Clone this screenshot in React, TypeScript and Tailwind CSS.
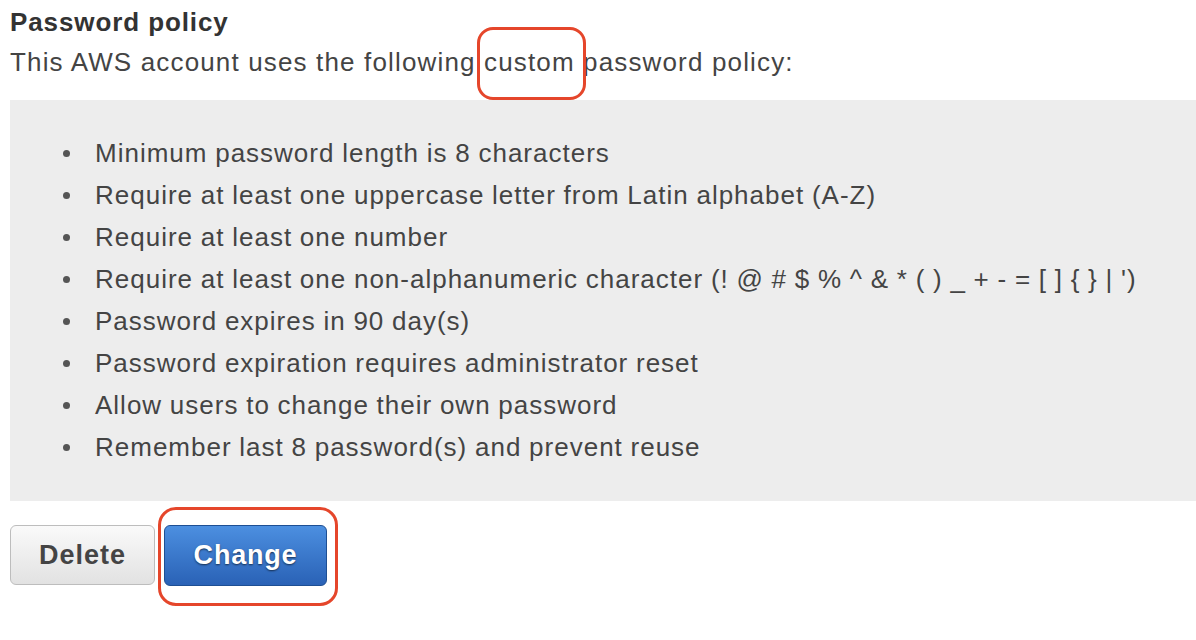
const rules = [
  'Minimum password length is 8 characters',
  'Require at least one uppercase letter from Latin alphabet (A-Z)',
  'Require at least one number',
  "Require at least one non-alphanumeric character (! @ # $ % ^ & * ( ) _ + - = [ ] { } | ')",
  'Password expires in 90 day(s)',
  'Password expiration requires administrator reset',
  'Allow users to change their own password',
  'Remember last 8 password(s) and prevent reuse',
]

export default function App() {
  return (
    <div className="min-h-[640px] bg-white pl-[10px] font-['Liberation_Sans',Arial,sans-serif] text-[#444]">
      <h2 className="pt-[4px] text-[26px] font-bold leading-[36px] tracking-[0.9px] text-[#333]">Password policy</h2>
      <p className="text-[26px] leading-[44px] tracking-[1.15px]">
        This AWS account uses the following{' '}
        <span className="relative">
          custom
          <span className="absolute -top-[20px] -left-[7px] h-[73px] w-[109px] rounded-[16px] border-[3px] border-[#e5462b]" />
        </span>{' '}
        password policy:
      </p>

      <div className="mt-[16px] bg-[#ededed] pt-[32px] pb-[33px]">
        <ul className="pl-[53px] text-[26px] leading-[42px] tracking-[1px] [word-spacing:-0.5px]">
          {rules.map((r) => (
            <li key={r} className="flex items-center">
              <span className="mr-[25px] h-[7px] w-[7px] shrink-0 rounded-full bg-[#555]" />
              <span>{r}</span>
            </li>
          ))}
        </ul>
      </div>

      <div className="mt-[24px] flex items-start gap-[9px]">
        <button className="h-[60px] w-[145px] rounded-[6px] border border-[#bdbdbd] bg-gradient-to-b from-[#fafafa] to-[#e2e2e2] text-[27px] font-bold tracking-[1px] text-[#444]">
          Delete
        </button>
        <div className="relative">
          <button className="h-[61px] w-[163px] rounded-[6px] border border-[#1e4f93] bg-gradient-to-b from-[#4c8fe0] to-[#2a62b6] text-[27px] font-bold tracking-[0.8px] text-white [text-shadow:0_1px_2px_rgba(0,0,0,0.6)]">
            Change
          </button>
          <span className="absolute -top-[18px] -left-[6px] h-[99px] w-[180px] rounded-[18px] border-[3px] border-[#e5462b]" />
        </div>
      </div>
    </div>
  )
}
